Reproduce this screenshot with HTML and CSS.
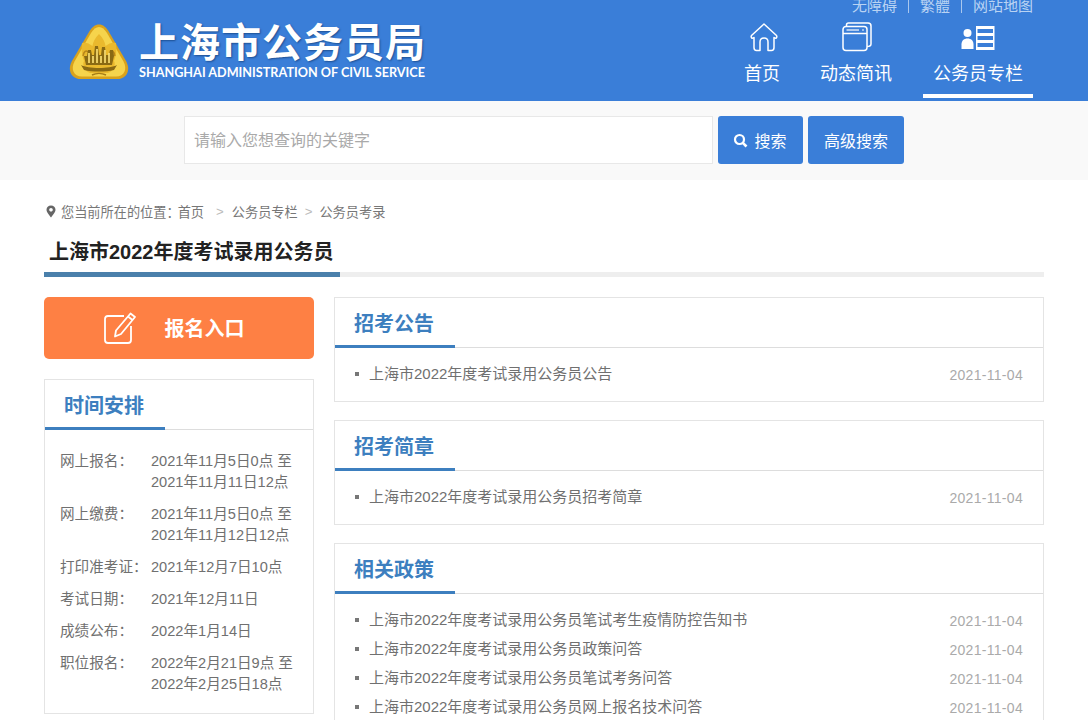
FILE: index.html
```html
<!DOCTYPE html>
<html lang="zh-CN">
<head>
<meta charset="UTF-8">
<meta name="viewport" content="width=device-width, initial-scale=1.0">
<title>上海市2022年度考试录用公务员</title>
<link rel="stylesheet" href="styles.css">
</head>
<body>
<header class="header">
  <div class="wrap header-inner">
    <a class="logo" href="#">
      <svg class="emblem" width="62" height="58" viewBox="0 0 62 58">
        <path d="M31 1.500C27 1.500 24 4 21 9L4 38C-1 47 3 56 13 56H49C59 56 63 47 58 38L41 9C38 4 35 1.500 31 1.500Z" fill="#d9a21c"/>
        <path d="M31 4C28 4 25.500 6 23 10L6.500 38.500C2.500 46 5.500 53.500 14 53.500H48C56.500 53.500 59.500 46 55.500 38.500L39 10C36.500 6 34 4 31 4Z" fill="#f6d44c"/>
        <path d="M31 11C27 15 25 19 24.500 23C21 20 17 19 14 20C13 27 14 33 16 38C14 42 16 48 22 50H40C46 48 48 42 46 38C48 33 49 27 48 20C45 19 41 20 37.500 23C37 19 35 15 31 11Z" fill="#eab92d"/>
        <path d="M15 33C16 28 18 27 20 29M47 33C46 28 44 27 42 29" fill="none" stroke="#b9861a" stroke-width="1.500"/>
        <path d="M16 33H19L20 27H23L24 32H26L27 23H30L31 32H33L34 24H37L38 32H41L42 27H45L46 33L44 42H18Z" fill="#8a6a14"/>
        <path d="M21 40V30M25 40V33M29 40V26M33 40V33M37 40V27M41 40V30" stroke="#f7dc72" stroke-width="1.700"/>
        <path d="M13 42C20 46 42 46 49 42L46 47C38 49 24 49 16 47Z" fill="#8a6a14"/>
        <path d="M24 52C28 50 34 50 38 52" fill="none" stroke="#a87c14" stroke-width="1.500"/>
      </svg>
      <span class="logo-text">
        <span class="logo-cn">上海市公务员局</span>
        <span class="logo-en">SHANGHAI ADMINISTRATION OF CIVIL SERVICE</span>
      </span>
    </a>
    <div class="header-right">
      <div class="top-links">
        <a href="#">无障碍</a>
        <a href="#">繁體</a>
        <a href="#">网站地图</a>
      </div>
      <nav class="nav">
        <a class="nav-item nav-home" href="#">
          <svg width="30" height="30" viewBox="0 0 30 30" fill="none" stroke="#fff" stroke-width="1.500" stroke-linejoin="round">
            <path d="M2.500 13.500L15 2L27.500 13.500C28.500 15.500 27 17 25 15.500V25.500C25 27.500 24 28.500 22.500 28.500H19V20C19 17.500 17.500 16 15 16C12.500 16 11 17.500 11 20V28.500H7.500C6 28.500 5 27.500 5 25.500V15.500C3 17 1.500 15.500 2.500 13.500Z"/>
          </svg>
          <span>首页</span>
        </a>
        <a class="nav-item nav-news" href="#">
          <svg width="30" height="30" viewBox="0 0 30 30" fill="none" stroke="#fff" stroke-width="1.500">
            <rect x="1" y="4.500" width="24" height="24" rx="3"/>
            <path d="M4.500 4.500V3C4.500 1.800 5.300 1 6.500 1H26C27.700 1 29 2.300 29 4V22C29 23.500 28 24.500 25 24.500"/>
            <path d="M1 11.500H25"/>
            <path d="M4.500 8H17" stroke-width="1.200"/>
            <path d="M20 8H22" stroke-width="1.200"/>
          </svg>
          <span>动态简讯</span>
        </a>
        <a class="nav-item nav-active" href="#">
          <svg width="34" height="26" viewBox="0 0 34 26" fill="#fff">
            <circle cx="6.500" cy="8" r="4"/>
            <path d="M0.500 24V19.500C0.500 15.500 3 13.500 6.500 13.500C10 13.500 12.500 15.500 12.500 19.500V24Z"/>
            <path d="M15 1H33.500V25H15ZM16.500 4V8H32V4ZM16.500 11V15H32V11ZM16.500 18V22H32V18Z" fill-rule="evenodd"/>
          </svg>
          <span>公务员专栏</span>
        </a>
      </nav>
    </div>
  </div>
</header>

<div class="search-bar">
  <input class="search-input" type="text" placeholder="请输入您想查询的关键字">
  <button class="search-btn btn-search" type="button">
    <svg width="15" height="15" viewBox="0 0 15 15" fill="none" stroke="#fff">
      <circle cx="6.500" cy="6.500" r="4.500" stroke-width="2.200"/>
      <path d="M9.800 9.800L13.500 13.500" stroke-width="2.600"/>
    </svg>
    搜索
  </button>
  <button class="search-btn btn-advanced" type="button">高级搜索</button>
</div>

<main class="wrap">
  <div class="crumbs">
    <svg width="10" height="13" viewBox="0 0 10 13">
      <path d="M5 0.500C2.300 0.500 0.500 2.400 0.500 4.800C0.500 7.500 3.500 10.500 5 12.500C6.500 10.500 9.500 7.500 9.500 4.800C9.500 2.400 7.700 0.500 5 0.500ZM5 3C6 3 6.800 3.800 6.800 4.800C6.800 5.800 6 6.600 5 6.600C4 6.600 3.200 5.800 3.200 4.800C3.200 3.800 4 3 5 3Z" fill="#666" fill-rule="evenodd"/>
    </svg>
    <span class="crumb-here">您当前所在的位置：</span>
    <a href="#">首页</a>
    <i class="crumb-sep first">&gt;</i>
    <a href="#">公务员专栏</a>
    <i class="crumb-sep">&gt;</i>
    <a href="#">公务员考录</a>
  </div>

  <h1 class="page-title"><span>上海市2022年度考试录用公务员</span></h1>

  <div class="columns">
    <aside class="side">
      <a class="signup" href="#">
        <svg width="34" height="34" viewBox="0 0 34 34" fill="none" stroke="#fff" stroke-width="1.800" stroke-linejoin="round">
          <path d="M21 5H5C3 5 2 6 2 8V29C2 31 3 32 5 32H25C27 32 28 31 28 29V15"/>
          <path d="M27.500 2.500L32 6L18 23L12 25.500L13 19.500Z"/>
          <path d="M25 5.500L29.500 9"/>
        </svg>
        <span>报名入口</span>
      </a>
      <section class="panel">
        <h2 class="panel-title"><span>时间安排</span></h2>
        <dl class="schedule">
          <div class="schedule-row"><dt>网上报名：</dt><dd>2021年11月5日0点 至 2021年11月11日12点</dd></div>
          <div class="schedule-row"><dt>网上缴费：</dt><dd>2021年11月5日0点 至 2021年11月12日12点</dd></div>
          <div class="schedule-row"><dt>打印准考证：</dt><dd>2021年12月7日10点</dd></div>
          <div class="schedule-row"><dt>考试日期：</dt><dd>2021年12月11日</dd></div>
          <div class="schedule-row"><dt>成绩公布：</dt><dd>2022年1月14日</dd></div>
          <div class="schedule-row"><dt>职位报名：</dt><dd>2022年2月21日9点 至 2022年2月25日18点</dd></div>
        </dl>
      </section>
    </aside>

    <div class="content">
      <section class="panel">
        <h2 class="panel-title"><span>招考公告</span></h2>
        <ul class="news">
          <li><a href="#">上海市2022年度考试录用公务员公告</a><time>2021-11-04</time></li>
        </ul>
      </section>
      <section class="panel">
        <h2 class="panel-title"><span>招考简章</span></h2>
        <ul class="news">
          <li><a href="#">上海市2022年度考试录用公务员招考简章</a><time>2021-11-04</time></li>
        </ul>
      </section>
      <section class="panel">
        <h2 class="panel-title"><span>相关政策</span></h2>
        <ul class="news">
          <li><a href="#">上海市2022年度考试录用公务员笔试考生疫情防控告知书</a><time>2021-11-04</time></li>
          <li><a href="#">上海市2022年度考试录用公务员政策问答</a><time>2021-11-04</time></li>
          <li><a href="#">上海市2022年度考试录用公务员笔试考务问答</a><time>2021-11-04</time></li>
          <li><a href="#">上海市2022年度考试录用公务员网上报名技术问答</a><time>2021-11-04</time></li>
        </ul>
      </section>
    </div>
  </div>
</main>
</body>
</html>
```

FILE: styles.css
```css
* {
  box-sizing: border-box;
}
body {
  margin: 0;
  background-color: #fff;
  color: #707070;
  font-family: "Liberation Sans", "Noto Sans CJK SC", sans-serif;
  font-size: 14px;
}
a {
  color: inherit;
  text-decoration: none;
}
.wrap {
  width: 1000px;
  margin: 0 auto;
}

/* header */
.header {
  height: 101px;
  background-color: #3a7ed8;
  overflow: hidden;
}
.header-inner {
  display: flex;
  justify-content: space-between;
  height: 101px;
}
.logo {
  display: flex;
  align-items: flex-start;
  padding: 23px 0 0 24px;
}
.emblem {
  margin-right: 9px;
}
.logo-text {
  display: flex;
  flex-direction: column;
  color: #fff;
}
.logo-cn {
  font-size: 40px;
  font-weight: 700;
  line-height: 40px;
  letter-spacing: 1px;
  text-shadow: 1px 1px 2px #1d4f92;
  white-space: nowrap;
}
.logo-en {
  margin-top: 3px;
  font-family: "Lato", sans-serif;
  font-size: 12.650px;
  font-weight: 700;
  line-height: 14px;
  white-space: nowrap;
}
.header-right {
  display: flex;
  flex-direction: column;
  align-items: flex-end;
  padding-right: 11px;
}
.top-links {
  display: flex;
  height: 14px;
  margin-top: -1px;
  color: #b9d3f3;
  font-size: 15px;
  line-height: 14px;
}
.top-links a {
  padding: 0 11px;
  border-left: 1px solid #a9c7ee;
}
.top-links a:first-child {
  border-left: 0;
}
.top-links a:last-child {
  padding-right: 0;
}
.nav {
  display: flex;
  margin-top: 9px;
}
.nav-item {
  display: flex;
  flex-direction: column;
  align-items: center;
  justify-content: space-between;
  height: 76px;
  padding-bottom: 13px;
  color: #fff;
  font-size: 18px;
  line-height: 22px;
}
.nav-home {
  width: 36px;
  margin-right: 40px;
}
.nav-home svg {
  margin-left: 3px;
}
.nav-news {
  width: 72px;
  margin-right: 31px;
}
.nav-news svg {
  margin-left: 2px;
}
.nav-active {
  width: 110px;
  border-bottom: 4px solid #fff;
  padding-bottom: 9px;
}
.nav-active svg {
  margin-top: 3px;
}

/* search */
.search-bar {
  display: flex;
  justify-content: center;
  gap: 5px;
  height: 79px;
  padding-top: 15px;
  background-color: #f9f9f9;
}
.search-input {
  width: 529px;
  height: 48px;
  padding: 2px 9px 0;
  border: 1px solid #e8e8e8;
  background-color: #fff;
  font-family: inherit;
  font-size: 16px;
}
.search-input::placeholder {
  color: #aaa;
}
.search-btn {
  display: flex;
  align-items: center;
  justify-content: center;
  gap: 6px;
  height: 48px;
  padding: 0;
  border: 0;
  border-radius: 3px;
  background-color: #3a7ed8;
  color: #fff;
  font-family: inherit;
  font-size: 16px;
}
.btn-search {
  width: 85px;
}
.btn-search svg {
  margin-left: -1px;
}
.btn-advanced {
  width: 96px;
}

/* breadcrumb and title */
.crumbs {
  display: flex;
  align-items: center;
  height: 20px;
  margin-top: 21px;
  padding-left: 2px;
  color: #777;
  font-size: 13.200px;
}
.crumb-here {
  margin: 0 -2px 0 5px;
}
.crumb-sep {
  margin: 0 7px;
  color: #bbb;
  font-style: normal;
}
.crumb-sep.first {
  margin-left: 12px;
  margin-right: 8px;
}
.page-title {
  margin: 15px 0 20px;
  border-bottom: 5px solid #eee;
  color: #222;
  font-size: 20px;
  font-weight: 700;
  line-height: 28px;
}
.page-title span {
  display: block;
  width: 296px;
  height: 41px;
  margin-bottom: -5px;
  padding: 2px 0 0 5px;
  border-bottom: 5px solid #4a80ab;
}

/* columns */
.columns {
  display: flex;
  align-items: flex-start;
  gap: 20px;
}
.side {
  flex: 0 0 270px;
}
.content {
  flex: 1;
}
.signup {
  display: flex;
  align-items: center;
  justify-content: center;
  gap: 28px;
  height: 62px;
  margin-bottom: 20px;
  padding-right: 11px;
  border-radius: 5px;
  background-color: #fe8044;
  color: #fff;
  font-size: 20px;
  font-weight: 700;
}
.signup span {
  margin-top: -2px;
}
.panel {
  margin-bottom: 18px;
  border: 1px solid #e4e4e4;
}
.panel-title {
  height: 50px;
  margin: 0;
  border-bottom: 1px solid #ddd;
  color: #3d7fbf;
  font-size: 20px;
  font-weight: 700;
  line-height: 53px;
}
.panel-title span {
  display: block;
  width: 120px;
  height: 50px;
  padding-left: 19px;
  border-bottom: 3px solid #3d7fbf;
}

/* schedule */
.schedule {
  margin: 0;
  padding: 21px 15px 7px;
  font-size: 14.600px;
  line-height: 21px;
}
.schedule-row {
  display: flex;
  margin-bottom: 11px;
}
.schedule dt {
  flex: 0 0 91px;
  white-space: nowrap;
}
.schedule dd {
  margin: 0;
}

/* news list */
.news {
  margin: 0;
  padding: 11px 20px 13px;
  list-style: none;
}
.news li {
  display: flex;
  justify-content: space-between;
  align-items: center;
  height: 29px;
}
.news a {
  position: relative;
  margin-bottom: 2px;
  padding-left: 14px;
  font-size: 15px;
}
.news a::before {
  content: "";
  position: absolute;
  left: 0;
  top: 10px;
  width: 4px;
  height: 4px;
  background-color: #777;
}
.news time {
  padding-top: 2px;
  color: #aaa;
  letter-spacing: 0.300px;
}
```
